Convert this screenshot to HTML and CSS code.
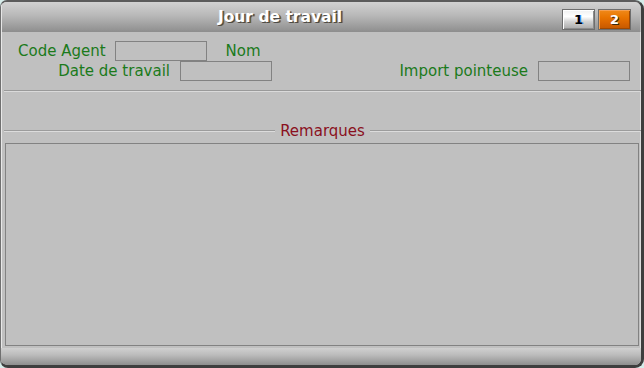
FILE: index.html
```html
<!DOCTYPE html>
<html lang="fr">
<head>
<meta charset="utf-8">
<title>Jour de travail</title>
<link rel="stylesheet" href="styles.css">
</head>
<body>
<div class="window">
  <div class="titlebar">
    <div class="title">Jour de travail</div>
    <div class="tabs">
      <span class="tab">1</span>
      <span class="tab active">2</span>
    </div>
  </div>
  <div class="content">
    <div class="row row1">
      <span class="lbl">Code Agent</span>
      <span class="field"></span>
      <span class="lbl nom">Nom</span>
    </div>
    <div class="row row2">
      <div class="group">
        <span class="lbl lbl-date">Date de travail</span>
        <span class="field"></span>
      </div>
      <div class="group">
        <span class="lbl">Import pointeuse</span>
        <span class="field"></span>
      </div>
    </div>
    <div class="sep"></div>
    <div class="section">
      <span class="line"></span>
      <span class="stitle">Remarques</span>
      <span class="line"></span>
    </div>
    <div class="memo"></div>
  </div>
  <div class="footer"></div>
</div>
</body>
</html>
```
FILE: styles.css
```css
html, body {
  margin: 0;
  padding: 0;
}
body {
  background: #d6ecea;
  width: 644px;
  height: 368px;
  overflow: hidden;
  font-family: "DejaVu Sans", Verdana, sans-serif;
}
.window {
  box-sizing: border-box;
  width: 644px;
  height: 368px;
  display: flex;
  flex-direction: column;
  border-top: 2px solid #5c5c5c;
  border-left: 1px solid #707070;
  border-right: 3px solid #3e3e3e;
  border-bottom: 3px solid #3e3e3e;
  border-radius: 7px 9px 9px 8px;
  overflow: hidden;
  background: #c0c0c0;
}
.titlebar {
  height: 30px;
  flex: none;
  display: flex;
  background: linear-gradient(to bottom, #d2d2d2 0%, #b8b8b8 45%, #8e8e8e 100%);
  box-shadow: inset 1px 0 0 #e6e6e6, inset -1px 0 0 #bdbdbd;
}
.title {
  flex: 1;
  text-align: center;
  color: #ffffff;
  font-weight: bold;
  font-size: 15.5px;
  line-height: 30px;
  text-shadow: 1px 1px 0 #4a4a4a, 2px 1px 0 #8a6a3a;
  padding-right: 3px;
}
.tabs {
  display: flex;
  gap: 3px;
  padding: 7px 10px 1px 0;
  box-sizing: border-box;
}
.tab {
  box-sizing: border-box;
  width: 33px;
  height: 21px;
  border: 1px solid #6e6e6e;
  background: linear-gradient(to bottom, #f0f0f0 0%, #ffffff 35%, #d4d4d4 60%, #aaaaaa 100%);
  box-shadow: inset 1px 1px 0 #ffffff, inset -1px -1px 0 #8c8c8c;
  font-weight: bold;
  font-size: 13px;
  line-height: 19px;
  text-align: center;
  color: #000;
  text-shadow: 1px 0 0 #4aa0ff;
}
.tab.active {
  background: linear-gradient(to bottom, #f08a1a 0%, #e87400 40%, #d86400 70%, #c45800 100%);
  border-color: #6e6e6e;
  box-shadow: inset 1px 1px 0 #f6a050, inset -1px -1px 0 #a04800;
  color: #fff;
  text-shadow: 1px 1px 0 #3a2a10;
}
.content {
  flex: 1;
  display: flex;
  flex-direction: column;
  padding-top: 9px;
  box-shadow: inset -1px 0 0 #dcdcdc, inset 1px 0 0 #e8e8e8;
}
.row {
  display: flex;
  align-items: center;
  height: 20px;
}
.lbl {
  color: #1b7a1b;
  font-size: 15px;
  line-height: 18px;
  white-space: nowrap;
}
.field {
  box-sizing: border-box;
  width: 92px;
  height: 20px;
  border: 1px solid #828282;
  background: #c0c0c0;
  margin-left: 10px;
}
.row1 {
  padding-left: 17px;
}
.row1 .field {
  margin-left: 9px;
}
.nom {
  margin-left: 19px;
}
.row2 {
  justify-content: space-between;
  padding-right: 11px;
}
.group {
  display: flex;
  align-items: center;
}
.lbl-date {
  width: 169px;
  text-align: right;
}
.sep {
  margin: 9px 0 0 3px;
  height: 1px;
  border-top: 1px solid #9a9a9a;
  background: #dadada;
}
.section {
  margin: 29px 0 0 3px;
  height: 20px;
  display: flex;
  align-items: center;
}
.line {
  flex: 1;
  height: 1px;
  border-top: 1px solid #9c9c9c;
  background: #dcdcdc;
}
.stitle {
  color: #8a1020;
  font-size: 15px;
  line-height: 18px;
  margin: 0 5px;
}
.memo {
  flex: 1;
  box-sizing: border-box;
  margin: 2px 2px 2px 4px;
  border: 1px solid #828282;
}
.footer {
  height: 17px;
  flex: none;
  background: linear-gradient(to bottom, #d0d0d0 0%, #bcbcbc 40%, #8e8e8e 100%);
}
```
